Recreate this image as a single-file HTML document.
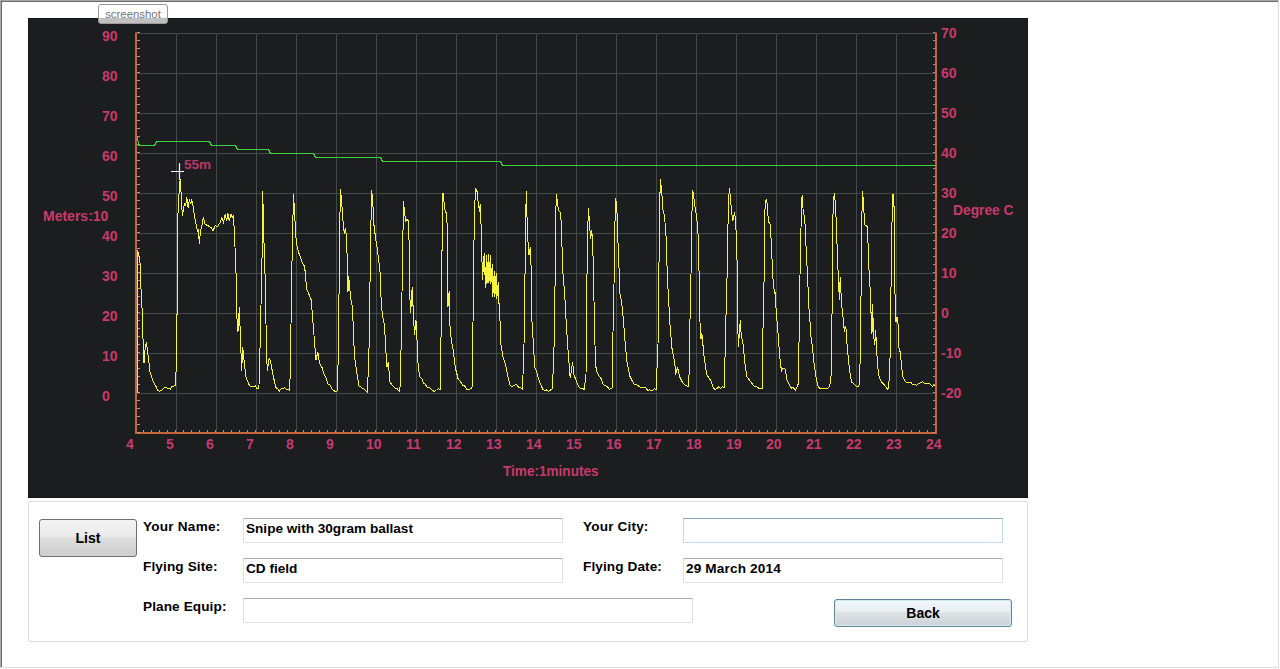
<!DOCTYPE html>
<html><head><meta charset="utf-8"><style>
html,body{margin:0;padding:0}
body{width:1280px;height:669px;overflow:hidden;background:#fff;position:relative;font-family:"Liberation Sans",sans-serif}
.frame{position:absolute;left:0;top:0;width:1279px;height:668px;box-sizing:border-box;border-left:1px solid #a8a8a8;border-top:1px solid #a8a8a8;border-right:1px solid #dedede;border-bottom:1px solid #dedede;box-shadow:inset 1px 1px 0 #6c6c6c}
svg{position:absolute;left:0;top:0}
.cl{position:absolute;font-weight:bold;white-space:nowrap;line-height:1;}
.fl{position:absolute;font-weight:bold;white-space:nowrap;line-height:1;font-size:13.6px;color:#000;letter-spacing:0.22px}
.tx{position:absolute;font-weight:bold;white-space:nowrap;line-height:1;font-size:13.6px;color:#000}
.box{position:absolute;left:28px;top:501px;width:998px;height:139px;border:1px solid #dcdcdc;border-radius:2px;background:#fff}
.inp{position:absolute;box-sizing:border-box;height:25px;background:#fff;border:1px solid #e2e2e2;border-top-color:#ababab}
.btn{position:absolute;box-sizing:border-box;border:1px solid #707070;border-radius:3px;background:linear-gradient(#f2f2f2 0%,#ebebeb 45%,#dddddd 50%,#cfcfcf 100%);text-align:center;font-weight:bold;font-size:14px;color:#000}
.shot{position:absolute;left:98px;top:4px;width:70px;height:20px;box-sizing:border-box;border:1px solid #9a9a9a;border-radius:3px;background:rgba(255,255,255,0.72);font-size:11.4px;color:#757575;text-align:center;line-height:18px}
</style></head><body>
<div class="frame"></div>
<svg width="1280" height="669" viewBox="0 0 1280 669">
<rect x="28" y="18" width="1000" height="480" fill="#1c1d1f"/><rect x="28.5" y="18.5" width="999" height="479" fill="none" stroke="#151617" stroke-width="1"/>
<path d="M176.5 33V433 M216.5 33V433 M256.5 33V433 M296.5 33V433 M336.5 33V433 M376.5 33V433 M416.5 33V433 M456.5 33V433 M496.5 33V433 M536.5 33V433 M576.5 33V433 M616.5 33V433 M656.5 33V433 M696.5 33V433 M736.5 33V433 M776.5 33V433 M816.5 33V433 M856.5 33V433 M896.5 33V433 M136 33.5H936 M136 73.5H936 M136 113.5H936 M136 153.5H936 M136 193.5H936 M136 233.5H936 M136 273.5H936 M136 313.5H936 M136 353.5H936 M136 393.5H936" stroke="#444a47" stroke-width="1" fill="none"/>
<path d="M136 32.5V434 M936 32.5V434 M135 433H937" stroke="#c8643a" stroke-width="2" fill="none"/>
<path d="M137 32.5H140 M933 32.5H935 M137 40.5H140 M933 40.5H935 M137 48.5H140 M933 48.5H935 M137 56.5H140 M933 56.5H935 M137 64.5H140 M933 64.5H935 M137 72.5H140 M933 72.5H935 M137 80.5H140 M933 80.5H935 M137 88.5H140 M933 88.5H935 M137 96.5H140 M933 96.5H935 M137 104.5H140 M933 104.5H935 M137 112.5H140 M933 112.5H935 M137 120.5H140 M933 120.5H935 M137 128.5H140 M933 128.5H935 M137 136.5H140 M933 136.5H935 M137 144.5H140 M933 144.5H935 M137 152.5H140 M933 152.5H935 M137 160.5H140 M933 160.5H935 M137 168.5H140 M933 168.5H935 M137 176.5H140 M933 176.5H935 M137 184.5H140 M933 184.5H935 M137 192.5H140 M933 192.5H935 M137 200.5H140 M933 200.5H935 M137 208.5H140 M933 208.5H935 M137 216.5H140 M933 216.5H935 M137 224.5H140 M933 224.5H935 M137 232.5H140 M933 232.5H935 M137 240.5H140 M933 240.5H935 M137 248.5H140 M933 248.5H935 M137 256.5H140 M933 256.5H935 M137 264.5H140 M933 264.5H935 M137 272.5H140 M933 272.5H935 M137 280.5H140 M933 280.5H935 M137 288.5H140 M933 288.5H935 M137 296.5H140 M933 296.5H935 M137 304.5H140 M933 304.5H935 M137 312.5H140 M933 312.5H935 M137 320.5H140 M933 320.5H935 M137 328.5H140 M933 328.5H935 M137 336.5H140 M933 336.5H935 M137 344.5H140 M933 344.5H935 M137 352.5H140 M933 352.5H935 M137 360.5H140 M933 360.5H935 M137 368.5H140 M933 368.5H935 M137 376.5H140 M933 376.5H935 M137 384.5H140 M933 384.5H935 M137 392.5H140 M933 392.5H935 M137 400.5H140 M933 400.5H935 M137 408.5H140 M933 408.5H935 M137 416.5H140 M933 416.5H935 M137 424.5H140 M933 424.5H935 M137 432.5H140 M933 432.5H935 M143.5 430V432 M151.5 430V432 M159.5 430V432 M167.5 430V432 M175.5 430V432 M183.5 430V432 M191.5 430V432 M199.5 430V432 M207.5 430V432 M215.5 430V432 M223.5 430V432 M231.5 430V432 M239.5 430V432 M247.5 430V432 M255.5 430V432 M263.5 430V432 M271.5 430V432 M279.5 430V432 M287.5 430V432 M295.5 430V432 M303.5 430V432 M311.5 430V432 M319.5 430V432 M327.5 430V432 M335.5 430V432 M343.5 430V432 M351.5 430V432 M359.5 430V432 M367.5 430V432 M375.5 430V432 M383.5 430V432 M391.5 430V432 M399.5 430V432 M407.5 430V432 M415.5 430V432 M423.5 430V432 M431.5 430V432 M439.5 430V432 M447.5 430V432 M455.5 430V432 M463.5 430V432 M471.5 430V432 M479.5 430V432 M487.5 430V432 M495.5 430V432 M503.5 430V432 M511.5 430V432 M519.5 430V432 M527.5 430V432 M535.5 430V432 M543.5 430V432 M551.5 430V432 M559.5 430V432 M567.5 430V432 M575.5 430V432 M583.5 430V432 M591.5 430V432 M599.5 430V432 M607.5 430V432 M615.5 430V432 M623.5 430V432 M631.5 430V432 M639.5 430V432 M647.5 430V432 M655.5 430V432 M663.5 430V432 M671.5 430V432 M679.5 430V432 M687.5 430V432 M695.5 430V432 M703.5 430V432 M711.5 430V432 M719.5 430V432 M727.5 430V432 M735.5 430V432 M743.5 430V432 M751.5 430V432 M759.5 430V432 M767.5 430V432 M775.5 430V432 M783.5 430V432 M791.5 430V432 M799.5 430V432 M807.5 430V432 M815.5 430V432 M823.5 430V432 M831.5 430V432 M839.5 430V432 M847.5 430V432 M855.5 430V432 M863.5 430V432 M871.5 430V432 M879.5 430V432 M887.5 430V432 M895.5 430V432 M903.5 430V432 M911.5 430V432 M919.5 430V432 M927.5 430V432" stroke="#c09080" stroke-width="1" fill="none"/>
<polyline points="137.5,136.5 138.5,144.5 138.5,145.5 154.5,145.5 156.5,141.5 209.5,141.5 211.5,145.5 235.5,145.5 237.5,149.5 268.5,149.5 270.5,153.5 313.5,153.5 315.5,157.5 380.5,157.5 382.5,161.5 500.5,161.5 502.5,165.5 935.0,165.5" stroke="#3cd23c" stroke-width="1" fill="none" shape-rendering="crispEdges"/>
<polyline points="137.3,393.0 137.6,250.0 139.9,259.7 140.8,284.4 142.3,314.0 143.3,348.6 144.0,363.4 145.3,346.0 146.5,343.6 148.2,356.0 150.2,373.3 152.1,378.2 153.9,383.1 155.8,385.9 157.6,390.6 159.3,391.2 160.9,390.4 162.6,389.5 164.6,387.5 166.7,388.0 168.7,388.0 170.4,388.9 172.1,386.3 173.7,386.2 175.4,385.6 176.6,358.5 177.4,274.5 178.2,194.5 179.0,194.5 180.2,178.8 181.2,194.5 182.3,215.9 183.5,209.3 184.5,202.7 185.6,206.0 186.8,197.0 188.1,207.6 189.4,199.4 190.6,204.3 191.7,199.4 193.0,206.0 194.7,217.5 196.3,225.7 197.6,232.3 198.3,229.0 199.3,243.8 200.4,232.3 202.1,224.1 203.4,217.5 204.9,224.1 207.8,225.7 211.1,227.4 213.1,230.7 215.2,225.7 217.7,226.5 220.2,222.4 221.8,217.5 223.5,222.4 225.1,214.2 226.7,220.8 227.9,213.4 229.2,220.8 230.9,214.2 232.2,217.5 233.3,215.9 234.1,227.4 235.8,265.0 236.5,290.5 237.0,318.6 238.0,331.7 239.3,307.4 240.2,331.0 241.7,371.0 242.7,346.6 244.0,359.7 245.8,376.5 248.6,384.0 250.9,386.9 253.3,386.8 255.2,385.9 257.0,388.5 258.9,388.6 260.2,341.0 262.0,260.0 262.7,191.0 264.2,250.0 265.5,288.7 266.4,350.3 267.3,371.0 269.2,357.8 270.5,361.6 273.0,374.6 275.7,387.7 277.6,388.4 279.5,391.0 281.3,388.4 283.2,388.3 285.0,387.7 286.6,389.6 288.2,389.6 289.8,390.5 291.0,324.0 292.2,250.0 293.5,194.0 296.3,243.4 298.2,251.0 301.9,262.0 304.7,266.8 306.6,288.7 311.2,299.9 314.0,335.4 316.0,359.7 317.8,352.2 319.6,363.4 322.0,367.5 324.3,374.6 326.1,378.3 328.0,384.0 329.9,384.7 331.8,388.8 333.7,390.5 335.5,391.8 337.4,391.0 338.3,352.0 340.3,189.2 341.6,200.4 342.7,217.3 343.5,227.5 344.6,234.0 345.3,228.5 346.4,236.0 347.8,275.0 348.0,292.0 348.7,276.0 350.6,298.0 352.4,307.4 353.4,329.8 354.3,354.0 355.2,361.6 357.1,374.6 359.0,385.8 361.8,387.7 364.6,389.6 367.4,392.4 368.9,356.0 370.2,270.0 371.5,190.0 372.6,198.6 373.9,224.7 375.8,239.7 377.6,251.0 380.4,275.0 380.8,294.3 382.3,314.8 384.6,326.0 385.7,348.5 387.0,367.2 388.3,361.6 389.8,382.0 392.6,385.8 395.4,388.6 397.2,388.5 399.1,391.4 400.6,384.0 401.4,318.6 402.5,270.0 403.4,201.4 404.7,213.5 405.7,221.0 407.0,219.0 408.5,221.0 409.4,254.6 410.0,300.0 410.7,313.0 412.2,286.8 413.1,307.4 414.5,335.4 416.0,320.4 416.9,337.3 418.2,367.2 419.7,376.5 421.6,378.4 423.5,383.0 425.3,384.1 427.2,387.7 429.5,387.6 431.8,389.6 434.1,391.6 436.5,390.5 438.4,388.6 440.2,389.6 441.2,326.0 441.7,270.0 443.0,192.6 444.9,209.8 446.8,214.5 447.7,251.0 447.9,307.4 449.2,290.6 450.0,326.0 451.4,341.0 453.3,350.3 455.2,367.2 458.0,378.4 460.8,382.0 462.6,385.4 464.5,385.8 466.9,389.2 469.2,389.6 472.0,387.7 473.5,288.7 474.3,213.0 475.7,188.2 477.1,191.7 478.2,203.3 479.6,212.0 480.2,204.0 480.9,218.9 481.8,256.7 482.8,280.0 483.3,260.0 484.7,252.8 485.2,287.7 486.5,254.7 487.0,283.8 488.4,253.7 488.9,282.9 490.4,254.7 490.9,283.8 492.3,264.4 492.8,296.5 494.3,271.2 494.8,297.4 496.2,273.2 496.7,299.4 498.3,281.9 498.8,303.3 499.3,303.3 501.0,344.7 502.8,356.0 505.6,365.3 508.4,378.4 510.3,385.8 512.6,386.4 515.0,384.9 516.9,384.8 518.7,387.7 520.6,387.6 522.5,389.6 524.0,344.7 526.2,191.1 527.7,237.8 529.0,254.6 530.3,247.2 531.4,275.0 531.9,320.4 533.4,344.7 534.7,367.2 536.5,371.3 538.4,378.4 541.2,385.8 543.1,389.6 545.0,390.5 546.9,389.9 548.7,391.4 550.5,390.0 552.4,388.6 553.9,354.0 555.2,275.0 555.8,211.7 556.5,194.5 557.7,204.2 558.4,210.7 559.9,211.7 560.8,215.4 561.8,239.7 562.7,270.0 564.6,292.4 566.4,326.0 568.3,354.0 570.2,378.4 572.6,361.6 573.9,374.6 576.7,382.0 578.5,386.3 580.4,388.6 582.3,388.1 584.2,389.6 586.0,374.6 587.0,275.0 587.5,234.0 588.5,208.3 589.8,228.5 590.7,238.8 591.7,230.3 592.6,239.7 593.5,275.0 594.5,326.0 595.4,359.7 596.3,371.0 598.2,374.6 601.0,378.4 602.9,383.6 604.7,385.8 607.0,386.2 609.4,389.6 612.2,387.7 613.5,298.0 614.5,270.0 615.0,221.0 615.6,197.6 616.9,207.9 617.4,230.3 618.2,247.2 619.3,275.0 619.7,292.4 621.6,301.8 623.4,320.4 625.3,344.7 627.2,363.4 630.0,376.5 632.8,382.0 634.6,384.9 636.5,384.9 638.4,385.8 640.2,387.3 642.1,387.7 644.0,387.2 645.9,388.1 647.7,390.6 649.6,389.6 651.2,391.1 652.9,390.1 654.5,388.6 656.1,389.6 658.0,344.7 658.9,275.0 659.5,209.8 660.4,179.5 661.7,191.1 663.0,209.8 664.5,215.4 666.0,236.0 667.3,275.0 668.3,294.3 670.1,326.0 672.0,348.5 674.8,363.4 675.7,374.6 677.6,367.2 679.5,376.5 682.3,382.0 685.1,384.9 687.0,385.9 688.8,386.8 690.3,303.6 691.0,275.0 691.8,219.0 692.6,189.6 694.0,198.6 695.4,209.8 696.7,217.3 698.2,236.0 699.1,275.0 700.0,322.3 701.0,339.1 701.9,333.5 703.8,354.0 706.6,374.6 709.4,378.4 711.2,381.5 713.1,387.7 715.0,389.6 716.8,388.6 718.7,386.9 720.5,388.6 722.4,386.4 724.3,387.7 726.2,307.4 727.1,275.0 728.0,224.7 729.2,188.3 730.3,196.7 731.4,209.8 732.7,221.0 734.6,212.6 735.5,219.0 736.5,239.7 737.4,275.0 737.5,286.8 737.8,326.0 738.4,346.6 740.3,320.4 741.2,335.4 743.1,344.7 744.9,363.4 746.8,376.5 749.6,380.2 752.4,384.0 754.3,386.7 756.1,386.0 758.0,387.7 760.0,389.1 762.1,388.6 763.3,309.2 764.2,275.0 765.1,202.3 766.1,199.5 767.4,204.2 768.3,221.0 770.2,224.7 771.5,245.3 772.6,275.0 773.3,281.2 774.5,294.3 775.2,292.4 776.3,313.0 778.2,335.4 779.5,354.0 781.4,371.0 783.3,368.0 785.1,369.0 787.0,380.2 789.8,385.8 791.6,388.2 793.5,387.7 795.4,390.5 798.2,384.0 799.5,316.7 800.0,275.0 801.0,228.5 801.6,198.6 802.5,194.8 803.2,213.5 804.7,216.3 805.7,239.7 806.6,258.4 807.5,275.0 808.1,288.7 808.9,307.4 809.4,314.8 810.3,326.0 810.7,335.4 812.2,344.7 814.1,363.4 815.9,376.5 817.8,385.8 819.7,388.2 821.6,388.6 823.5,388.6 825.3,388.6 827.2,388.6 829.0,386.8 830.9,382.0 831.8,335.4 832.4,275.0 833.1,206.0 834.3,192.6 835.6,206.0 836.5,230.3 838.0,269.6 838.4,275.0 839.3,299.9 840.2,277.5 841.7,305.5 843.0,316.7 844.4,331.7 845.8,326.0 847.3,348.5 849.2,367.2 851.4,382.0 854.3,384.0 856.6,386.4 858.9,386.8 859.9,372.8 860.8,307.4 861.4,275.0 861.7,221.0 862.7,191.5 863.8,209.8 864.9,224.7 867.3,226.6 868.3,249.0 869.2,275.0 870.1,288.7 871.1,314.8 872.0,333.5 872.6,303.6 873.5,335.4 874.8,344.7 875.7,329.8 876.7,352.2 878.5,374.6 881.3,382.0 883.2,383.9 885.1,385.8 887.9,389.6 889.8,374.6 890.7,307.4 891.2,275.0 891.8,228.5 892.9,194.8 893.7,194.5 894.4,221.0 894.8,275.0 894.8,286.8 895.9,322.3 897.2,316.7 898.2,326.0 899.1,350.3 900.4,352.2 901.5,365.3 902.8,376.5 905.6,382.0 907.5,382.5 909.4,383.0 911.2,382.9 913.1,384.9 915.0,384.2 916.8,385.5 918.7,383.2 920.6,383.0 922.5,381.5 924.3,383.5 926.2,383.0 928.0,383.5 929.9,384.0 932.2,386.2 934.6,385.5" stroke="#f5f540" stroke-width="1" fill="none" shape-rendering="crispEdges"/>
<path d="M171 171.5H184M179.5 163V180" stroke="#ffffff" stroke-width="1.2" fill="none"/>
</svg>
<div class="cl" style="left:102px;top:29px;font-size:14px;color:#c83a6c">90</div>
<div class="cl" style="left:102px;top:69px;font-size:14px;color:#c83a6c">80</div>
<div class="cl" style="left:102px;top:109px;font-size:14px;color:#c83a6c">70</div>
<div class="cl" style="left:102px;top:149px;font-size:14px;color:#c83a6c">60</div>
<div class="cl" style="left:102px;top:189px;font-size:14px;color:#c83a6c">50</div>
<div class="cl" style="left:102px;top:229px;font-size:14px;color:#c83a6c">40</div>
<div class="cl" style="left:102px;top:269px;font-size:14px;color:#c83a6c">30</div>
<div class="cl" style="left:102px;top:309px;font-size:14px;color:#c83a6c">20</div>
<div class="cl" style="left:102px;top:349px;font-size:14px;color:#c83a6c">10</div>
<div class="cl" style="left:102px;top:389px;font-size:14px;color:#c83a6c">0</div>
<div class="cl" style="left:941px;top:26px;font-size:14px;color:#c83a6c">70</div>
<div class="cl" style="left:941px;top:66px;font-size:14px;color:#c83a6c">60</div>
<div class="cl" style="left:941px;top:106px;font-size:14px;color:#c83a6c">50</div>
<div class="cl" style="left:941px;top:146px;font-size:14px;color:#c83a6c">40</div>
<div class="cl" style="left:941px;top:186px;font-size:14px;color:#c83a6c">30</div>
<div class="cl" style="left:941px;top:226px;font-size:14px;color:#c83a6c">20</div>
<div class="cl" style="left:941px;top:266px;font-size:14px;color:#c83a6c">10</div>
<div class="cl" style="left:941px;top:306px;font-size:14px;color:#c83a6c">0</div>
<div class="cl" style="left:941px;top:346px;font-size:14px;color:#c83a6c">-10</div>
<div class="cl" style="left:941px;top:386px;font-size:14px;color:#c83a6c">-20</div>
<div class="cl" style="left:126px;top:437px;font-size:14px;color:#c83a6c">4</div>
<div class="cl" style="left:166px;top:437px;font-size:14px;color:#c83a6c">5</div>
<div class="cl" style="left:206px;top:437px;font-size:14px;color:#c83a6c">6</div>
<div class="cl" style="left:246px;top:437px;font-size:14px;color:#c83a6c">7</div>
<div class="cl" style="left:286px;top:437px;font-size:14px;color:#c83a6c">8</div>
<div class="cl" style="left:326px;top:437px;font-size:14px;color:#c83a6c">9</div>
<div class="cl" style="left:366px;top:437px;font-size:14px;color:#c83a6c">10</div>
<div class="cl" style="left:406px;top:437px;font-size:14px;color:#c83a6c">11</div>
<div class="cl" style="left:446px;top:437px;font-size:14px;color:#c83a6c">12</div>
<div class="cl" style="left:486px;top:437px;font-size:14px;color:#c83a6c">13</div>
<div class="cl" style="left:526px;top:437px;font-size:14px;color:#c83a6c">14</div>
<div class="cl" style="left:566px;top:437px;font-size:14px;color:#c83a6c">15</div>
<div class="cl" style="left:606px;top:437px;font-size:14px;color:#c83a6c">16</div>
<div class="cl" style="left:646px;top:437px;font-size:14px;color:#c83a6c">17</div>
<div class="cl" style="left:686px;top:437px;font-size:14px;color:#c83a6c">18</div>
<div class="cl" style="left:726px;top:437px;font-size:14px;color:#c83a6c">19</div>
<div class="cl" style="left:766px;top:437px;font-size:14px;color:#c83a6c">20</div>
<div class="cl" style="left:806px;top:437px;font-size:14px;color:#c83a6c">21</div>
<div class="cl" style="left:846px;top:437px;font-size:14px;color:#c83a6c">22</div>
<div class="cl" style="left:886px;top:437px;font-size:14px;color:#c83a6c">23</div>
<div class="cl" style="left:926px;top:437px;font-size:14px;color:#c83a6c">24</div>
<div class="cl" style="left:503px;top:464px;font-size:14.6px;color:#c83a6c;transform:scaleX(0.93);transform-origin:0 0">Time:1minutes</div>
<div class="cl" style="left:43px;top:209px;font-size:14px;color:#c83a6c">Meters:10</div>
<div class="cl" style="left:953px;top:204px;font-size:13.8px;color:#c83a6c">Degree C</div>
<div class="cl" style="left:184px;top:157.5px;font-size:13.6px;color:#b8386a">55m</div>
<div class="shot">screenshot</div>
<div class="box"></div>
<div class="btn" style="left:39px;top:519px;width:98px;height:38px;line-height:36px">List</div>
<div class="fl" style="left:143px;top:520px">Your Name:</div>
<div class="fl" style="left:143px;top:560px;letter-spacing:0.12px">Flying Site:</div>
<div class="fl" style="left:143px;top:600px;letter-spacing:0.1px">Plane Equip:</div>
<div class="fl" style="left:583px;top:520px;letter-spacing:0.16px">Your City:</div>
<div class="fl" style="left:583px;top:560px;letter-spacing:0.1px">Flying Date:</div>
<div class="inp" style="left:243px;top:518px;width:320px"></div>
<div class="tx" style="left:246px;top:522px">Snipe with 30gram ballast</div>
<div class="inp" style="left:243px;top:558px;width:320px"></div>
<div class="tx" style="left:246px;top:562px">CD field</div>
<div class="inp" style="left:243px;top:598px;width:450px"></div>
<div class="inp" style="left:683px;top:518px;width:320px;border-color:#c5d9ec;border-top-color:#8da6c0"></div>
<div class="inp" style="left:683px;top:558px;width:320px"></div>
<div class="tx" style="left:686px;top:562px;letter-spacing:0.15px">29 March 2014</div>
<div class="btn" style="left:834px;top:599px;width:178px;height:28px;line-height:26px;border-color:#5f8596;background:linear-gradient(#f0f8fb 0%,#e8eef1 45%,#dde2e5 50%,#ccd3d8 100%);box-shadow:inset 0 0 0 1px #d2ecf5">Back</div>
</body></html>
